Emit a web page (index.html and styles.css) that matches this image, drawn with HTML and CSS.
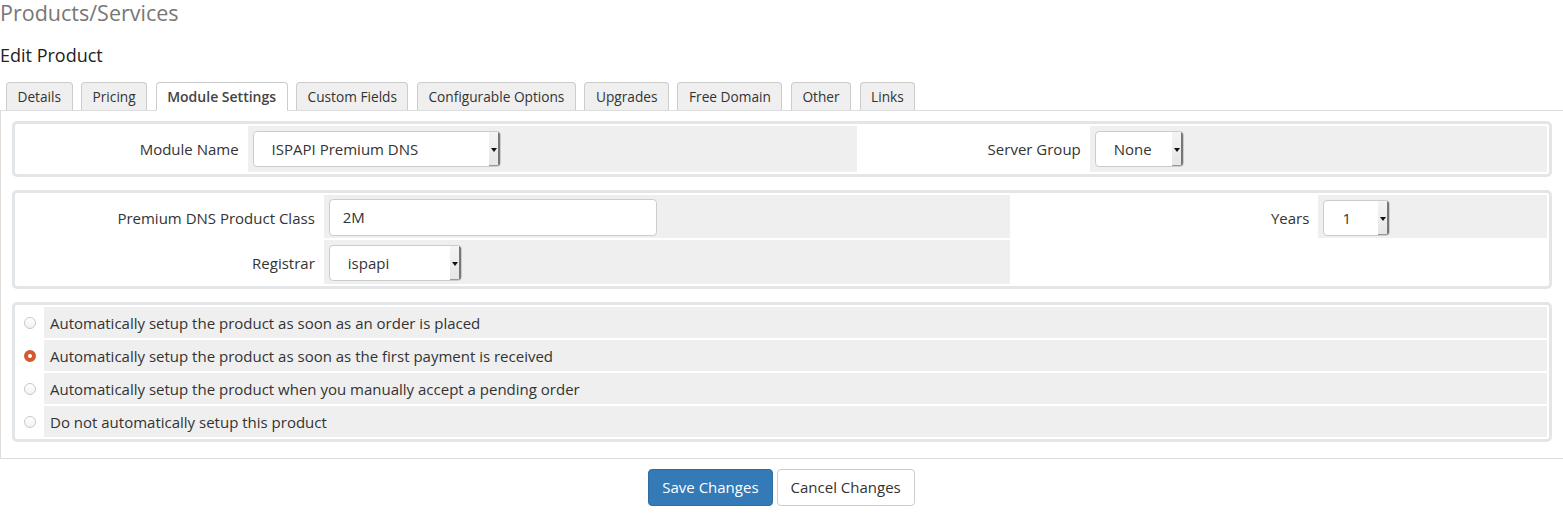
FILE: index.html
```html
<!DOCTYPE html>
<html>
<head>
<meta charset="utf-8">
<link rel="stylesheet" href="styles.css">
</head>
<body>
<h1 class="page-title">Products/Services</h1>
<h2 class="sub-title">Edit Product</h2>
<ul class="tabs">
  <li class="tab">Details</li>
  <li class="tab">Pricing</li>
  <li class="tab active">Module Settings</li>
  <li class="tab">Custom Fields</li>
  <li class="tab">Configurable Options</li>
  <li class="tab">Upgrades</li>
  <li class="tab">Free Domain</li>
  <li class="tab">Other</li>
  <li class="tab">Links</li>
</ul>
<div class="panel">
  <div class="box">
    <table class="form form-a">
      <colgroup><col class="c15"><col class="c40"><col class="c15"><col class="c30"></colgroup>
      <tr>
        <td class="label">Module Name</td>
        <td class="field"><div class="select sel-module"><span class="sel-text">ISPAPI Premium DNS</span><span class="sel-arrow"></span></div></td>
        <td class="label">Server Group</td>
        <td class="field"><div class="select sel-server"><span class="sel-text">None</span><span class="sel-arrow"></span></div></td>
      </tr>
    </table>
  </div>
  <div class="box">
    <table class="form form-b">
      <colgroup><col class="c20"><col class="c45"><col class="c20"><col class="c15"></colgroup>
      <tr class="row-first">
        <td class="label">Premium DNS Product Class</td>
        <td class="field"><div class="input">2M</div></td>
        <td class="label">Years</td>
        <td class="field"><div class="select sel-years"><span class="sel-text">1</span><span class="sel-arrow"></span></div></td>
      </tr>
      <tr class="row-second">
        <td class="label">Registrar</td>
        <td class="field"><div class="select sel-registrar"><span class="sel-text">ispapi</span><span class="sel-arrow"></span></div></td>
        <td class="label" colspan="2"></td>
      </tr>
    </table>
  </div>
  <div class="box">
    <table class="form form-c">
      <colgroup><col class="c-radio"><col></colgroup>
      <tr>
        <td class="radio-cell"><span class="radio"></span></td>
        <td class="field opt">Automatically setup the product as soon as an order is placed</td>
      </tr>
      <tr>
        <td class="radio-cell"><span class="radio checked"></span></td>
        <td class="field opt">Automatically setup the product as soon as the first payment is received</td>
      </tr>
      <tr>
        <td class="radio-cell"><span class="radio"></span></td>
        <td class="field opt">Automatically setup the product when you manually accept a pending order</td>
      </tr>
      <tr>
        <td class="radio-cell"><span class="radio"></span></td>
        <td class="field opt">Do not automatically setup this product</td>
      </tr>
    </table>
  </div>
</div>
<div class="actions">
  <button class="btn btn-primary">Save Changes</button>
  <button class="btn btn-default">Cancel Changes</button>
</div>
</body>
</html>
```
FILE: styles.css
```css
html, body {
  margin: 0;
  padding: 0;
  background: #fff;
}
body {
  font-family: "Open Sans", "Liberation Sans", sans-serif;
  font-size: 15px;
  color: #333;
  overflow: hidden;
}
.page-title {
  margin: 0;
  font-size: 21.5px;
  line-height: 26px;
  font-weight: normal;
  color: #777;
}
.sub-title {
  margin: 17px 0 0 0;
  font-size: 18px;
  line-height: 24px;
  font-weight: normal;
  color: #222;
}
.tabs {
  list-style: none;
  margin: 15px 0 0 0;
  padding: 0 0 0 6px;
  display: flex;
  gap: 8.5px;
  font-size: 13.7px;
}
.tab {
  border: 1px solid #ccc;
  border-bottom: none;
  border-radius: 4px 4px 0 0;
  background: #efefef;
  padding: 0 10.5px;
  line-height: 27px;
  color: #333;
}
.tab.active {
  background: #fff;
  font-size: 14px;
  font-weight: 600;
  color: #444;
  position: relative;
  z-index: 1;
  border-bottom: 1px solid #fff;
  margin-bottom: -1px;
}
.panel {
  border: 1px solid #ddd;
  border-right: none;
  padding: 10px 11px 16px 11px;
}
.box {
  border: 3px solid #e3e6e8;
  border-radius: 5px;
  margin-bottom: 13px;
}
.box:last-child {
  margin-bottom: 0;
}
.form {
  width: 100%;
  border-collapse: separate;
  border-spacing: 2px;
  table-layout: fixed;
}
.c15 { width: 15%; }
.c20 { width: 20%; }
.c30 { width: 30%; }
.c40 { width: 40%; }
.c45 { width: 45%; }
.c-radio { width: 25px; }
.form td {
  box-sizing: border-box;
  padding: 5px;
  vertical-align: middle;
}
.form td.label {
  background: #fff;
  text-align: right;
  padding-right: 7px;
}
.field {
  background: #efefef;
  text-align: left;
}
.form-a td { height: 46px; }
.form-b td {
  padding-top: 2px;
  padding-bottom: 0;
}
.form-b .row-first td { height: 43px; }
.form-b .row-second td { height: 44px; }
.select {
  display: flex;
  box-sizing: border-box;
  height: 36px;
  border: 1px solid #ccc;
  border-radius: 4px;
  background: #fff;
  overflow: hidden;
}
.sel-text {
  flex: 1;
  padding-left: 18px;
  line-height: 35px;
  color: #333;
  white-space: nowrap;
}
.sel-arrow {
  width: 9px;
  background: linear-gradient(#f4f4f4, #e6e6e6);
  border-right: 2px solid #777;
  border-bottom: 1px solid #999;
  position: relative;
}
.sel-arrow::after {
  content: "";
  position: absolute;
  left: 2px;
  top: 16px;
  border-left: 3px solid transparent;
  border-right: 3px solid transparent;
  border-top: 4px solid #111;
}
.sel-module { width: 248px; }
.sel-server { width: 89px; }
.sel-registrar { width: 133px; }
.sel-years { width: 67px; }
.input {
  box-sizing: border-box;
  width: 328px;
  height: 37px;
  border: 1px solid #ccc;
  border-radius: 4px;
  background: #fff;
  padding-left: 13px;
  line-height: 35px;
  color: #333;
}
.form-c td {
  height: 31px;
  padding-top: 0;
  padding-bottom: 0;
}
.form-c td.radio-cell {
  background: #fff;
  text-align: center;
  padding: 0;
}
.form-c td.opt {
  padding-left: 6px;
}
.radio {
  display: inline-block;
  box-sizing: border-box;
  width: 12px;
  height: 12px;
  border: 1px solid #c8c8c8;
  border-radius: 50%;
  background: linear-gradient(#fff, #f2f2f2);
  vertical-align: middle;
  margin-top: -3px;
}
.radio.checked {
  border: 4px solid #d25a2b;
  background: #fff;
}
.actions {
  text-align: center;
  padding-top: 10px;
  font-size: 0;
}
.btn {
  font-family: "Open Sans", "Liberation Sans", sans-serif;
  font-size: 15px;
  line-height: 19px;
  padding: 8px 13px;
  border-radius: 4px;
  border: 1px solid #ccc;
  margin: 0 2px;
}
.btn-primary {
  background: #337ab7;
  border-color: #2e6da4;
  color: #fff;
}
.btn-default {
  background: #fff;
  color: #333;
}
```
